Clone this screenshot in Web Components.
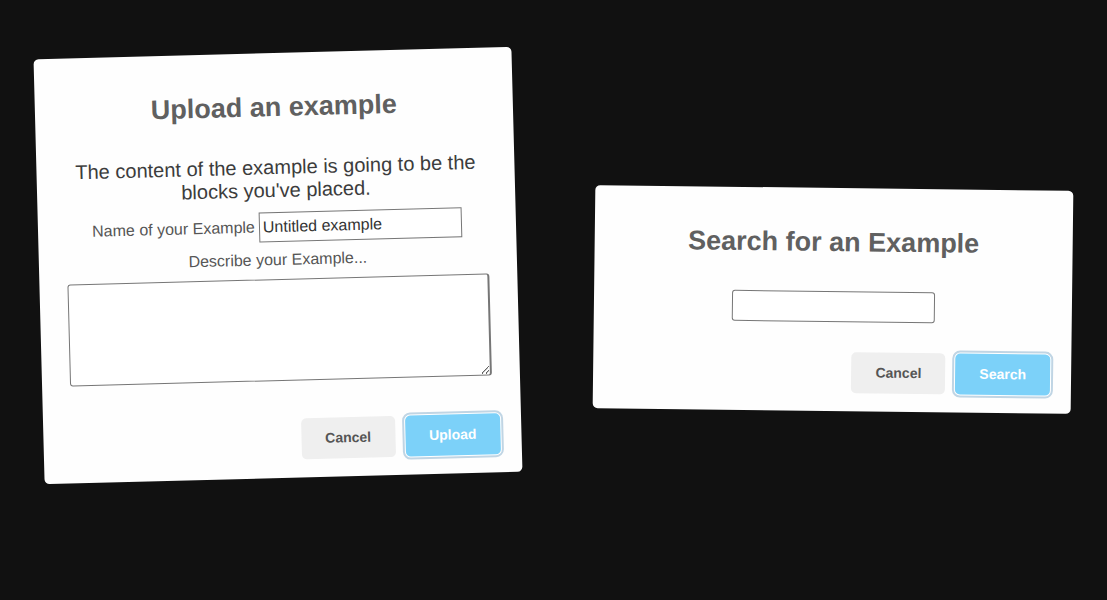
<!DOCTYPE html>
<html lang="en">
<head>
<meta charset="utf-8">
<meta name="viewport" content="width=device-width, initial-scale=1">
<title>Examples</title>
<style>
  body { margin: 0; background: #111; font-family: "Liberation Sans", Arial, sans-serif; }
</style>
</head>
<body>
<dialog-stage>
  <upload-dialog></upload-dialog>
  <search-dialog></search-dialog>
</dialog-stage>

<template id="stage-template">
  <style>
    :host {
      display: flex; flex-wrap: wrap; align-items: center; justify-content: center;
      gap: 32px 77px; min-height: 100vh; box-sizing: border-box; padding: 0 35px 2px 39px;
    }
    ::slotted(*) { flex: 0 1 478px; }
    ::slotted(upload-dialog) { margin-bottom: 67px; }
  </style>
  <slot></slot>
</template>

<template id="card-template">
  <style>
    :host { display: block; background: #fefefe; border-radius: 5px; text-align: center; }
    h2 { margin: 0; padding: 39px 16px 13px; color: #606060; font-size: 27px; line-height: 31px; font-weight: 600; }
    .content { padding: 20px 28px 0; }
    footer { display: flex; justify-content: flex-end; gap: 10px; padding: 18px 21px; }
  </style>
  <section>
    <h2><slot name="title"></slot></h2>
    <div class="content"><slot></slot></div>
    <footer><slot name="actions"></slot></footer>
  </section>
</template>

<template id="button-template">
  <style>
    :host { display: block; }
    button {
      display: block; border: 0; border-radius: 5px; padding: 10px 24px; margin: 0;
      font: 600 14px/21px "Liberation Sans", Arial, sans-serif;
      color: #555; background: #efefef; cursor: pointer;
    }
    :host([primary]) button {
      color: #fff; background: #7cd1f9;
      box-shadow: 0 0 0 1px #fff, 0 0 0 3px rgba(43, 114, 165, .29);
    }
  </style>
  <button type="button"><slot></slot></button>
</template>

<template id="upload-template">
  <style>
    :host { display: block; transform: rotate(-1.5deg); }
    p { margin: 0; color: #3c3c3c; font-size: 20px; line-height: 23px; }
    label { color: #555; font-size: 16px; line-height: 18px; }
    .name { display: flex; align-items: center; justify-content: center; gap: 4px; margin-top: 10px; }
    .describe { display: block; margin-top: 9px; }
    input, textarea {
      box-sizing: border-box; border: 1px solid #767676; background: #fff; color: #333;
      font: 16px/18px "Liberation Sans", Arial, sans-serif; outline: none;
    }
    input { width: 203px; min-width: 0; height: 30px; padding: 0 3px; }
    textarea { display: block; width: 100%; height: 102px; margin: 10px 0 20px; padding: 4px; border-right-width: 2px; border-radius: 3px; resize: both; }
  </style>
  <dialog-card>
    <span slot="title">Upload an example</span>
    <p>The content of the example is going to be the blocks you've placed.</p>
    <div class="name">
      <label for="name">Name of your Example</label>
      <input id="name" type="text" value="Untitled example">
    </div>
    <label class="describe" for="description">Describe your Example...</label>
    <textarea id="description"></textarea>
    <dialog-button slot="actions">Cancel</dialog-button>
    <dialog-button slot="actions" primary>Upload</dialog-button>
  </dialog-card>
</template>

<template id="search-template">
  <style>
    :host { display: block; transform: rotate(.7deg); }
    input {
      display: block; box-sizing: border-box; width: 203px; max-width: 100%; height: 31px;
      margin: 0 auto 12px; padding: 0 4px; border: 1px solid #767676; border-radius: 3px;
      background: #fff; color: #333; font: 16px/18px "Liberation Sans", Arial, sans-serif; outline: none;
    }
  </style>
  <dialog-card>
    <span slot="title">Search for an Example</span>
    <input type="search" aria-label="Search for an Example">
    <dialog-button slot="actions">Cancel</dialog-button>
    <dialog-button slot="actions" primary>Search</dialog-button>
  </dialog-card>
</template>

<script>
  class TemplateElement extends HTMLElement {
    constructor() {
      super();
      const template = document.getElementById(this.constructor.template);
      this.attachShadow({ mode: "open" }).append(template.content.cloneNode(true));
    }
  }
  class DialogStage extends TemplateElement { static template = "stage-template"; }
  class DialogCard extends TemplateElement { static template = "card-template"; }
  class DialogButton extends TemplateElement { static template = "button-template"; }
  class UploadDialog extends TemplateElement { static template = "upload-template"; }
  class SearchDialog extends TemplateElement { static template = "search-template"; }

  customElements.define("dialog-button", DialogButton);
  customElements.define("dialog-card", DialogCard);
  customElements.define("upload-dialog", UploadDialog);
  customElements.define("search-dialog", SearchDialog);
  customElements.define("dialog-stage", DialogStage);
</script>
</body>
</html>
